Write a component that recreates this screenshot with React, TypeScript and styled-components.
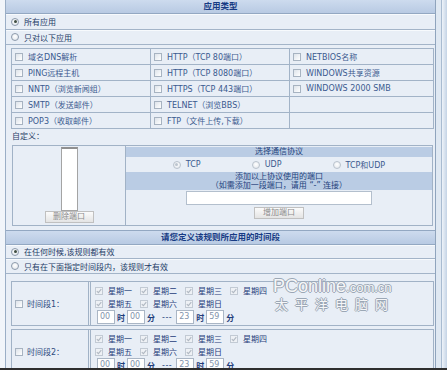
import React from 'react';
import styled, {createGlobalStyle, css} from 'styled-components';

const FONT = `"DejaVu Sans", "Noto Sans CJK SC", sans-serif`;
const LINE = '#a3b4c8';
const TEXT = '#2c4a7e';
const NAVY = '#173b84';

const GlobalStyle = createGlobalStyle`
  body {
    margin: 0;
    background: #e8eef6;
    font-family: ${FONT};
  }
`;

const Frame = styled.div`
  display: flex;
  width: 447px;
  height: 370px;
  overflow: hidden;

  border-bottom: 2px solid #2e2e2e;
  box-sizing: border-box;
`;

const LeftEdge = styled.div`
  flex: none;
  width: 5px;

  background: #f1f5fa;
  border-right: 1px solid #9aaec6;
`;

const RightEdge = styled.div`
  flex: none;
  width: 11px;

  background: linear-gradient(to right,
    #dfe8f2 0, #dfe8f2 5px,
    #a8bbd1 5px, #a8bbd1 6px,
    #eef3f9 6px, #c4d3e5 11px);
`;

const Panel = styled.div`
  position: relative;
  flex: none;
  width: 429px;
  overflow: hidden;

  font-size: 8px;
  color: ${TEXT};

  background: #e8eef6;
  border-right: 1px solid #8fa4bd;
`;

const SectionHead = styled.div<{$top?: boolean}>`
  height: 13px;

  font-size: 8.5px;
  font-weight: bold;
  line-height: 13px;
  text-align: center;

  color: ${NAVY};

  background: linear-gradient(#cddbee, #b8cae3);
  border-bottom: 1px solid #93a8c2;
  ${({$top}) => $top && css`border-top: 1px solid #93a8c2;`}
`;

const OptionRow = styled.div<{$h: number}>`
  display: flex;
  align-items: center;
  gap: 5px;

  height: ${({$h}) => $h}px;
  padding-left: 5px;

  color: #243c66;

  border-bottom: 1px solid ${LINE};
  box-shadow: inset 0 1px 0 #f7fafd;
`;

const Radio = styled.span<{$checked?: boolean; $muted?: boolean}>`
  position: relative;
  flex: none;
  width: 8px;
  height: 8px;

  border: 1px solid ${({$muted}) => ($muted ? '#b9c2cd' : '#8d9aab')};
  border-radius: 50%;
  background: radial-gradient(circle at 50% 40%, #ffffff 0, #dfe4ea 100%);
  box-sizing: border-box;

  ${({$checked, $muted}) => $checked && css`
    &::after {
      content: '';
      position: absolute;
      inset: 1.5px;
      border-radius: 50%;
      background: ${$muted ? '#bcc5cf' : '#3f4d40'};
    }
  `}
`;

const Box = styled.span<{$muted?: boolean}>`
  display: flex;
  align-items: center;
  justify-content: center;
  flex: none;
  width: 8px;
  height: 8px;

  border: 1px solid ${({$muted}) => ($muted ? '#c2cad4' : '#a7b3c1')};
  background: ${({$muted}) => ($muted ? '#eef1f5' : 'linear-gradient(135deg, #dde3ea, #ffffff)')};
  box-sizing: border-box;
`;

const AppGrid = styled.div`
  display: grid;
  grid-template-columns: 138px 138px 143px;
  grid-auto-rows: 15px;
  gap: 1px;

  width: 423px;
  margin: 3px 0 0 5px;

  background: #a2b3c7;
  border: 1px solid #a2b3c7;
  box-sizing: border-box;
`;

const AppCell = styled.div`
  display: flex;
  align-items: center;
  gap: 5px;

  padding-left: 3px;

  white-space: nowrap;
  color: #3b5a8f;

  background: #e8eef6;
`;

const CustomLabel = styled.div`
  height: 14px;
  margin: 1px 0 0 6px;

  line-height: 14px;
  color: #2a3f66;
`;

const CustomBox = styled.div`
  display: grid;
  grid-template-columns: 113px 1fr;

  height: 81px;
  margin: 1px 2px 4px 6px;

  border: 1px solid #a1b2c6;
  box-sizing: border-box;
`;

const PortList = styled.div`
  display: flex;
  flex-direction: column;
  align-items: center;

  padding-top: 1px;

  border-right: 1px solid #a1b2c6;
`;

const ListBox = styled.div`
  width: 17px;
  height: 64px;

  background: #ffffff;
  border: 1px solid #a4a4a4;
  border-top: 2px solid #8f8f8f;
  box-sizing: border-box;
`;

const GrayButton = styled.button<{$w: number}>`
  width: ${({$w}) => $w}px;
  height: 12px;
  padding: 0;

  font-family: ${FONT};
  font-size: 8px;
  line-height: 10px;

  color: #8c8c8c;

  background: linear-gradient(#fbfbfb, #e4e4e4);
  border: 1px solid #c0c0c0;
`;

const ProtoCell = styled.div`
  display: flex;
  flex-direction: column;
  align-items: center;

  padding-top: 1px;
`;

const Band = styled.div<{$h: number}>`
  align-self: stretch;
  height: ${({$h}) => $h}px;

  line-height: 9px;
  text-align: center;

  color: #23427c;

  background: #bacce4;
`;

const ProtoRow = styled.div`
  display: flex;
  align-items: center;
  justify-content: center;
  gap: 51px;
  align-self: stretch;

  height: 15px;
`;

const ProtoOption = styled.span`
  display: flex;
  align-items: center;
  gap: 5px;

  color: #3b5a8f;
`;

const PortInput = styled.input`
  width: 186px;
  height: 14px;
  margin-top: 1px;
  margin-bottom: 2px;

  background: #ffffff;
  border: 1px solid #b3bfcd;
  box-sizing: border-box;
`;

const TimeBox = styled.div<{$first?: boolean}>`
  display: grid;
  grid-template-columns: 79px 1fr;

  width: 423px;
  margin: ${({$first}) => ($first ? 7 : 3)}px 0 0 5px;

  border: 1px solid #a1b2c6;
  box-sizing: border-box;
`;

const PeriodCell = styled.div`
  display: flex;
  align-items: center;
  gap: 4px;

  padding-left: 3px;

  color: #2f4c80;

  border-right: 3px double #a1b2c6;
`;

const DaysCell = styled.div`
  padding: 2px 0 1px 4px;
`;

const DayRow = styled.div`
  display: grid;
  grid-template-columns: repeat(4, 45px);
  height: 13px;
`;

const Day = styled.span`
  display: flex;
  align-items: center;
  gap: 5px;

  color: #1f3d7a;
`;

const ClockRow = styled.div`
  display: flex;
  align-items: center;
  gap: 2px;

  height: 14px;
  padding-left: 2px;

  color: #1f3d7a;
`;

const ClockInput = styled.span`
  width: 18px;
  height: 14px;
  padding-left: 2px;

  font-size: 8px;
  line-height: 12px;
  color: #8393ab;

  background: #ffffff;
  border: 1px solid #aab6c5;
  box-sizing: border-box;
`;

const Unit = styled.span`
  width: 8px;
  font-weight: bold;
`;

const Dash = styled.span`
  margin: 0 2px 0 5px;
  letter-spacing: 0.5px;
`;

const Watermark = styled.div`
  position: absolute;
  left: 267px;
  top: 277px;

  font-family: "Liberation Sans", sans-serif;
  color: rgba(255, 255, 255, 0.92);
  text-shadow: -1px 0 #9ba7b5, 1px 0 #9ba7b5, 0 -1px #9ba7b5, 0 1px #9ba7b5;

  pointer-events: none;
`;

const MarkTop = styled.div`
  font-size: 18px;
  line-height: 19px;

  span {
    font-size: 13px;
  }
`;

const MarkBottom = styled.div`
  margin-left: 2px;

  font-family: "Noto Sans CJK SC", sans-serif;
  font-size: 13px;
  line-height: 14px;
  letter-spacing: 7px;
`;

const Check = () => (
  <svg width="6" height="6" viewBox="0 0 6 6">
    <path d="M0.8 3.1 L2.4 4.7 L5.3 1.1" fill="none" stroke="#b0b8c2" strokeWidth="1.1" />
  </svg>
);

const APPS: string[][] = [
  ['域名DNS解析', 'HTTP（TCP 80端口）', 'NETBIOS名称'],
  ['PING远程主机', 'HTTP（TCP 8080端口）', 'WINDOWS共享资源'],
  ['NNTP（浏览新闻组）', 'HTTPS（TCP 443端口）', 'WINDOWS 2000 SMB'],
  ['SMTP（发送邮件）', 'TELNET（浏览BBS）', ''],
  ['POP3（收取邮件）', 'FTP（文件上传,下载）', ''],
];

const DAYS = [['星期一', '星期二', '星期三', '星期四'], ['星期五', '星期六', '星期日']];

const Period: React.FunctionComponent<{n: number; first?: boolean}> = ({n, first}) => (
  <TimeBox $first={first}>
    <PeriodCell>
      <Box />
      <span>时间段{n}：</span>
    </PeriodCell>
    <DaysCell>
      {DAYS.map((row, i) => (
        <DayRow key={i}>
          {row.map((d) => (
            <Day key={d}>
              <Box $muted><Check /></Box>
              {d}
            </Day>
          ))}
        </DayRow>
      ))}
      <ClockRow>
        <ClockInput>00</ClockInput>
        <Unit>时</Unit>
        <ClockInput>00</ClockInput>
        <Unit>分</Unit>
        <Dash>---</Dash>
        <ClockInput>23</ClockInput>
        <Unit>时</Unit>
        <ClockInput>59</ClockInput>
        <Unit>分</Unit>
      </ClockRow>
    </DaysCell>
  </TimeBox>
);

const App: React.FunctionComponent = () => {
  return (
    <>
      <GlobalStyle />
      <Frame>
        <LeftEdge />
        <Panel>
          <SectionHead>应用类型</SectionHead>
          <OptionRow $h={15}><Radio $checked />所有应用</OptionRow>
          <OptionRow $h={14}><Radio />只对以下应用</OptionRow>

          <AppGrid>
            {APPS.flat().map((name, i) => (
              <AppCell key={i}>
                {name && <><Box />{name}</>}
              </AppCell>
            ))}
          </AppGrid>

          <CustomLabel>自定义：</CustomLabel>
          <CustomBox>
            <PortList>
              <ListBox />
              <GrayButton $w={49}>删除端口</GrayButton>
            </PortList>
            <ProtoCell>
              <Band $h={10}>选择通信协议</Band>
              <ProtoRow>
                <ProtoOption><Radio $checked $muted />TCP</ProtoOption>
                <ProtoOption><Radio $muted />UDP</ProtoOption>
                <ProtoOption><Radio $muted />TCP和UDP</ProtoOption>
              </ProtoRow>
              <Band $h={18}>
                添加以上协议使用的端口<br />
                （如需添加一段端口，请用 “-” 连接）
              </Band>
              <PortInput readOnly />
              <GrayButton $w={50}>增加端口</GrayButton>
            </ProtoCell>
          </CustomBox>

          <SectionHead $top>请您定义该规则所应用的时间段</SectionHead>
          <OptionRow $h={13}><Radio $checked />在任何时候,该规则都有效</OptionRow>
          <OptionRow $h={14}><Radio />只有在下面指定时间段内，该规则才有效</OptionRow>

          <Period n={1} first />
          <Period n={2} />

          <Watermark>
            <MarkTop>PConline<span>.com.cn</span></MarkTop>
            <MarkBottom>太平洋电脑网</MarkBottom>
          </Watermark>
        </Panel>
        <RightEdge />
      </Frame>
    </>
  );
};

export default App;
